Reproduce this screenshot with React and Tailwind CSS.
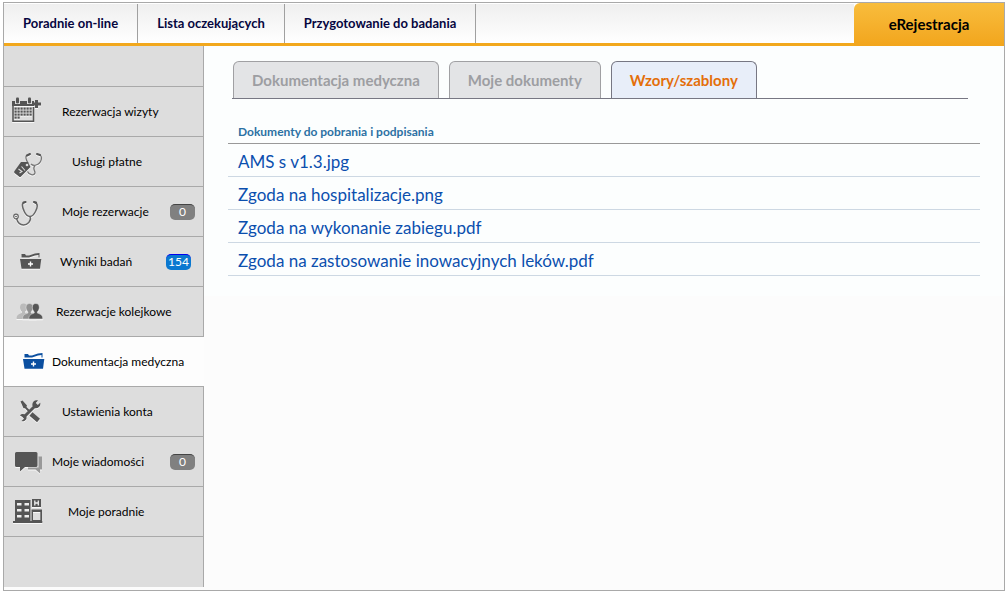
import { useState } from 'react';

const TOP_LINKS = ['Poradnie on-line', 'Lista oczekujących', 'Przygotowanie do badania'];

const TABS = ['Dokumentacja medyczna', 'Moje dokumenty', 'Wzory/szablony'];

const FILES = [
  'AMS s v1.3.jpg',
  'Zgoda na hospitalizacje.png',
  'Zgoda na wykonanie zabiegu.pdf',
  'Zgoda na zastosowanie inowacyjnych leków.pdf',
];

const MENU = [
  { label: 'Rezerwacja wizyty',     icon: CalendarIcon,    pad: 'pl-3.5' },
  { label: 'Usługi płatne',         icon: PaidIcon,        pad: 'pl-6' },
  { label: 'Moje rezerwacje',       icon: StethoscopeIcon, pad: 'pl-3.5', badge: 0 },
  { label: 'Wyniki badań',          icon: FolderIcon,      pad: 'pl-3', badge: 154 },
  { label: 'Rezerwacje kolejkowe',  icon: PeopleIcon,      pad: 'pl-2' },
  { label: 'Dokumentacja medyczna', icon: FolderIcon,      pad: 'pl-1' },
  { label: 'Ustawienia konta',      icon: ToolsIcon,       pad: 'pl-3.5' },
  { label: 'Moje wiadomości',       icon: ChatIcon,        pad: 'pl-1', badge: 0 },
  { label: 'Moje poradnie',         icon: ClinicIcon,      pad: 'pl-5' },
];

function Icon({ children }) {
  return (
    <svg viewBox="0 0 36 33" aria-hidden="true"
      className="w-9 h-[33px] shrink-0 overflow-visible drop-shadow-[0_1px_0_rgba(255,255,255,0.8)]">
      {children}
    </svg>
  );
}

function CalendarIcon() {
  const rows = [6, 6, 6, 2];
  return (
    <Icon>
      <path d="M1 10V26.2H21.5V12" fill="none" stroke="#555" strokeWidth="1.6" />
      <path d="M0 6H3V9H8V6H15V9H20V6H22V11H0Z" fill="#555" />
      <rect x="4" y="2.5" width="3" height="6" rx="1" fill="#555" />
      <rect x="16" y="2.5" width="3" height="6" rx="1" fill="#555" />
      <path d="M23 5H26V7.5H29V10.5H26V13H23V10.5H20.5V7.5H23Z" fill="#555" />
      {rows.map((n, r) => Array.from({ length: n }, (_, c) => (
        <rect key={`${r}-${c}`} x={2.5 + c * 3} y={12.5 + r * 3} width="2.2" height="2.2" fill="#555" />
      )))}
    </Icon>
  );
}

function PaidIcon() {
  return (
    <Icon>
      <path d="M15 10.5C13 11 14 15 16 18M27 9.5C31 11 30 18 24 20C21 21 20 20 19 19M23 20.5C20 24 23 25 23 28C22 31 17 30 15.5 26.5"
        fill="none" stroke="#777" strokeWidth="1.3" />
      <path d="M15 10.5L18 9M25 9L28 10" stroke="#555" strokeWidth="2" strokeLinecap="round" />
      <path d="M2.5 26L9 17L16 17L18.5 22L9 31.5Q8 32.5 7 31.5L2.5 28Q1.8 27 2.5 26Z" fill="#555" />
      <circle cx="15" cy="20" r="1.3" fill="#ddd" />
      <path d="M6.5 24L10 26.5L7.5 28M9.5 21.5L13 25.5" fill="none" stroke="#ddd" strokeWidth="1.1" />
    </Icon>
  );
}

function StethoscopeIcon() {
  return (
    <Icon>
      <path d="M12.5 7.5C9 8 10.5 13 12.5 17C14 20 16 21.5 18 21.5C20 21.5 22 19.5 23.5 16.5C25.5 12.5 26.5 8.5 22.5 7.5"
        fill="none" stroke="#666" strokeWidth="1.5" />
      <path d="M18 21.5C20 26 15 30 11.5 30C7.5 30 5.5 27 4.5 23.5" fill="none" stroke="#666" strokeWidth="1.4" />
      <path d="M11.5 7.5L13.5 7M22 7L24 7.5" stroke="#555" strokeWidth="2.2" strokeLinecap="round" />
      <circle cx="4" cy="21.5" r="2.3" fill="none" stroke="#666" strokeWidth="1.2" />
      <circle cx="4" cy="21.5" r="0.8" fill="#555" />
    </Icon>
  );
}

function FolderIcon({ active }) {
  const color = active ? '#0b4fa0' : '#555';
  return (
    <Icon>
      <g transform={active ? 'translate(3 0)' : undefined}>
        <path d="M8 14H29.3L28 23.8H9.5Z" fill={color} />
        <path d="M9.5 12.5V9H13L14 10.5H17L23 8.5L27.5 8V12.5H26.5V10L23 10.5L17 12.5Z" fill={color} />
        <path d="M18.5 16.5V21.5M16 19H21" stroke="#fff" strokeWidth="1.4" />
      </g>
    </Icon>
  );
}

function PeopleIcon() {
  const person = 'M0 -5C2.4 -5 3.5 -3.4 3.5 -1.2C3.5 1 2.6 2.4 1.6 3.2V4.6C4 5.6 7 6 7 10.5H-7C-7 6 -4 5.6 -1.6 4.6V3.2C-2.6 2.4 -3.5 1 -3.5 -1.2C-3.5 -3.4 -2.4 -5 0 -5Z';
  return (
    <Icon>
      <path d={person} transform="translate(11.5 13.5)" fill="#bbb" />
      <path d={person} transform="translate(17.5 13.5)" fill="#909090" stroke="#ddd" strokeWidth="0.6" />
      <path d={person} transform="translate(23.8 13.5)" fill="#555" stroke="#ddd" strokeWidth="0.6" />
    </Icon>
  );
}

function ToolsIcon() {
  return (
    <Icon>
      <path d="M8.5 6.5L10.5 5.5L15 10.5L14.5 12L18 15.5L16.5 17L13 13.2L11.5 13.3Z" fill="#555" />
      <path d="M19 19L26.5 25.5" stroke="#555" strokeWidth="4.5" />
      <path d="M12 22L24.5 9.5" stroke="#555" strokeWidth="3" />
      <path d="M26 5.5C22.5 4.5 19.5 7.5 20.5 11L23 13.2C26.5 13.5 29 11 28.2 7.8L25.8 10L23.8 8Z" fill="#555" />
      <path d="M8 20.5C10 18 14 19 14.5 22C15 25 12 27 9.5 26L12 23.8L10.2 21.8Z" fill="#555" />
    </Icon>
  );
}

function ChatIcon() {
  return (
    <Icon>
      <path d="M26.5 11.5H30V24.5H28V28.5L23.5 24.5H16V22.5H26.5Z" fill="#999" />
      <path d="M4.5 7H24Q25.5 7 25.5 8.5V20.5Q25.5 22 24 22H13L8 26.5V22H4.5Q3 22 3 20.5V8.5Q3 7 4.5 7Z" fill="#555" />
    </Icon>
  );
}

function ClinicIcon() {
  return (
    <Icon>
      <path d="M1 26H3V5H18.5V26H30.3V28H1Z" fill="#555" />
      <path d="M5 8H9.5V10.5H5ZM12.5 8H17V10.5H12.5ZM5 14H9.5V16.5H5ZM12.5 14H17V16.5H12.5ZM5 20H9.5V22.5H5ZM12.5 20H17V22.5H12.5Z" fill="#eee" />
      <rect x="20" y="4" width="9" height="8" fill="#555" />
      <path d="M22.8 5.5V10.5M26.3 5.5V10.5M22.8 8H26.3" stroke="#eee" strokeWidth="1.3" />
      <path d="M19.5 14.5H30V27H19.5ZM21 17V25H28.3V17Z" fillRule="evenodd" fill="#555" />
    </Icon>
  );
}

function Badge({ count }) {
  return (
    <span className={`ml-auto w-[25px] h-4 rounded-[5px] border-t text-xs leading-[14px] text-center text-white
      ${count > 0 ? 'mr-3 bg-[#0a78d0] border-[#0000ee]' : 'mr-2 bg-[#808080] border-[#444]'}`}>
      {count}
    </span>
  );
}

export default function App() {
  const [page, setPage] = useState('Dokumentacja medyczna');
  const [tab,  setTab]  = useState('Wzory/szablony');

  return (
    <div className="mt-0.5 ml-[3px] mr-px border border-[#a9a9a9] bg-[#fcfcfc] font-['Lato',sans-serif]">
      {/* Top bar */}
      <header className="flex h-[43px] bg-[#f2a81d]">
        <nav className="flex flex-1 h-10 border-t border-white bg-linear-to-b from-[#efefef] to-white">
          {TOP_LINKS.map(l => (
            <a key={l} href="#" className="flex items-center px-[19px] border-r border-[#a0a0a0] text-[13px] font-bold text-[#06063f]">
              {l}
            </a>
          ))}
        </nav>
        <div className="bg-white">
          <a href="#" className="flex items-center justify-center w-[150px] h-full rounded-tl-md bg-linear-to-b from-[#f8bd3c] to-[#f2a51b] text-[15px] font-bold text-black">
            eRejestracja
          </a>
        </div>
      </header>

      <div className="flex">
        {/* Side menu */}
        <aside className="w-[200px] shrink-0 pb-[3px]">
          <div className="h-10 bg-[#ddd] border-r border-[#a9a9a9]" />
          {MENU.map(({ label, icon: MenuIcon, pad, badge }) => {
            const active = page === label;
            return (
              <button key={label} onClick={() => setPage(label)}
                className={`flex items-center w-full h-[50px] pl-2 border-t border-[#a9a9a9] text-xs text-black
                  ${active ? 'bg-[#fdfdfd]' : 'bg-[#ddd] border-r'}`}>
                <MenuIcon active={active} />
                <span className={`whitespace-nowrap ${pad}`}>{label}</span>
                {badge !== undefined && <Badge count={badge} />}
              </button>
            );
          })}
          <div className="h-[51px] bg-[#ddd] border-t border-r border-[#a9a9a9]" />
        </aside>

        <main className="flex-1">
          <section className="pt-[15px] pb-5 pl-6 pr-6 bg-[#fcfefe]">
            {/* Document tabs */}
            <div className="flex gap-2.5 ml-1 mr-3 pl-px border-b border-[#777783]">
              {TABS.map(t => (
                <button key={t} onClick={() => setTab(t)}
                  className={`h-[37px] px-[18px] border border-b-0 rounded-t-md text-[15px] font-bold
                    ${tab === t ? 'bg-[#e8eef9] border-[#777783] text-[#e46f0a]' : 'bg-[#e3e4e6] border-[#a0a0a3] text-[#9d9ea2]'}`}>
                  {t}
                </button>
              ))}
            </div>

            {/* Files to download */}
            <table className="w-full mt-[22px] text-left">
              <thead>
                <tr className="border-b border-[#999]">
                  <th className="h-[22px] px-2.5 text-xs font-bold text-[#2c71a3]">Dokumenty do pobrania i podpisania</th>
                </tr>
              </thead>
              <tbody>
                {FILES.map(f => (
                  <tr key={f} className="border-b border-[#cdd8e3]">
                    <td className="h-[33px] px-2.5 pt-1 leading-6">
                      <a href="#" className="text-[17px] text-[#0b4fae]">{f}</a>
                    </td>
                  </tr>
                ))}
              </tbody>
            </table>
          </section>
        </main>
      </div>
    </div>
  );
}
